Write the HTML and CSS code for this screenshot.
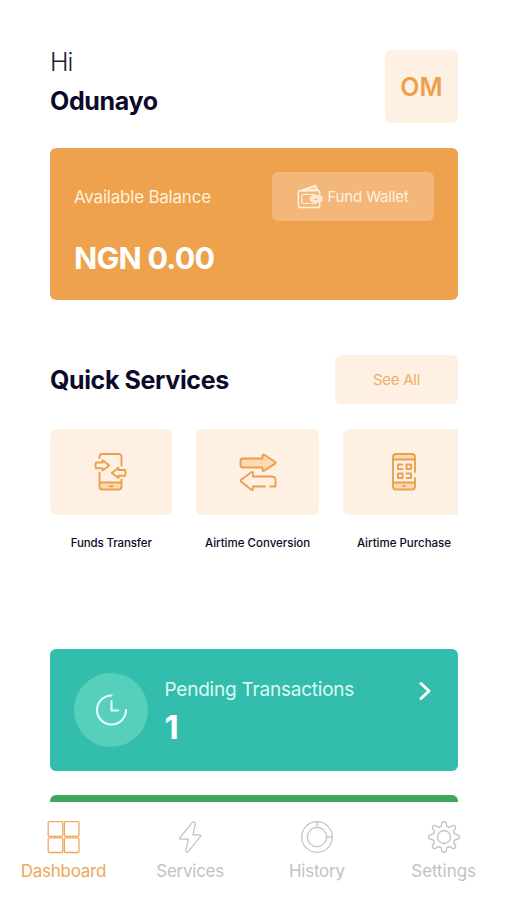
FILE: index.html
```html
<!DOCTYPE html>
<html lang="en">
<head>
<meta charset="utf-8">
<meta name="viewport" content="width=device-width, initial-scale=1">
<title>Dashboard</title>
<link rel="stylesheet" href="styles.css">
</head>
<body>
<div class="app">
  <main class="content">
    <header class="header">
      <div>
        <p class="greeting">Hi</p>
        <h1 class="name">Odunayo</h1>
      </div>
      <div class="avatar">OM</div>
    </header>

    <section class="balance">
      <div class="balance-row">
        <span class="balance-label">Available Balance</span>
        <button class="fund">
          <svg width="26" height="26" viewBox="0 0 26 26" fill="none" stroke="currentColor" stroke-width="1.5" stroke-linejoin="round" stroke-linecap="round">
            <path d="M4 6.800 18.500 1.500l2.200 4.600Z" fill="currentColor" fill-opacity=".45" />
            <path d="M22.700 10V8.300q0-1.500-1.500-1.500H3Q1.400 6.800 1.400 8.400v12.800q0 2.400 2.400 2.400h17.400q1.500 0 1.500-1.500V19" />
            <path d="M13 19.500H6q-1.200 0-1.200-1.200v-6.600q0-1.200 1.200-1.200h11.500q1.200 0 1.200 1M18.700 18.500v1h-4" stroke-width="1.200" />
            <path d="M16 11.800h7.200q1.800 0 1.800 1.800v2.600q0 1.800-1.800 1.800H16q-3-.5-3-3.100t3-3.100Z" fill="currentColor" fill-opacity=".8" stroke-width="1" />
            <path d="M17.500 15.500q1.500 1 3-.5" stroke="#f3b879" stroke-width="1" />
          </svg>
          <span>Fund Wallet</span>
        </button>
      </div>
      <strong class="amount">NGN 0.00</strong>
    </section>

    <section class="quick">
      <div class="quick-head">
        <h2 class="quick-title">Quick Services</h2>
        <button class="see-all">See All</button>
      </div>
      <div class="tiles">
        <div class="service">
          <div class="tile">
            <svg width="36" height="40" viewBox="0 0 36 40" fill="none" stroke="currentColor" stroke-width="1.900" stroke-linejoin="round" stroke-linecap="round">
              <path d="M7 31h22v3.500q0 3-3 3H10q-3 0-3-3Z" fill="#fbd9b5" stroke="none" />
              <path d="M6.500 6V5q0-3 3-3h16q3 0 3 3v8.500M6.500 20.500v14q0 3 3 3h16q3 0 3-3v-7M6.500 30.500h22M16.500 34.200h3" />
              <path d="M3 10.500h6.500V8.300l6.800 5.100-6.800 5.100v-2.200H3q-1.400-2.900 0-5.800ZM32 18h-6.500v-2.200l-6.800 5.100 6.800 5.100v-2.200H32q1.400-2.900 0-5.800Z" />
            </svg>
          </div>
          <span class="service-name narrow">Funds Transfer</span>
        </div>
        <div class="service">
          <div class="tile">
            <svg width="40" height="40" viewBox="0 0 40 40" fill="none" stroke="currentColor" stroke-width="1.900" stroke-linejoin="round" stroke-linecap="round">
              <path d="M4.500 6.500h20V3.800q0-2 1.700-1l10.800 7q1.300.900 0 1.800l-10.800 7q-1.700 1-1.700-1v-2.100h-20Q2.500 15.500 2.500 13V9q0-2.500 2-2.500Z" fill="#fbd9b5" />
              <path d="M27 34.500H15v2.300q0 2-1.700 1l-10-8q-1.300-1 0-2l10-7.600q1.700-1 1.700 1v3.300h19q3.500 0 3.500 3.500v6.500H32" />
            </svg>
          </div>
          <span class="service-name">Airtime Conversion</span>
        </div>
        <div class="service">
          <div class="tile">
            <svg width="26" height="40" viewBox="0 0 26 40" fill="none" stroke="currentColor" stroke-width="1.900" stroke-linejoin="round" stroke-linecap="round">
              <path d="M2 8V5q0-3 3-3h16q3 0 3 3v3ZM2 30.500h22v4q0 3-3 3H5q-3 0-3-3Z" fill="#fbd9b5" stroke="none" />
              <path d="M24 20V5q0-3-3-3H5Q2 2 2 5v29.500q0 3 3 3h16q3 0 3-3V26M2 7.500h22M2 30.500h22M12.300 34h1.400" />
              <path d="M11.500 12.500H7v4.500h4.500M15.500 12.500H20V17h-4.500ZM7 21.500h4.500V26H7ZM15.500 21.500H20V26h-4.500" />
            </svg>
          </div>
          <span class="service-name">Airtime Purchase</span>
        </div>
      </div>
    </section>

    <section class="pending">
      <div class="clock">
        <svg width="32" height="32" viewBox="0 0 32 32" fill="none" stroke="currentColor" stroke-width="2.100" stroke-linecap="round" stroke-linejoin="round">
          <path d="M16.500 1.500A14.500 14.500 0 1 0 31 16" />
          <path d="M16.500 7v9.500h6.500" />
        </svg>
      </div>
      <div class="pending-text">
        <span class="pending-label">Pending Transactions</span>
        <strong class="pending-count">1</strong>
      </div>
      <svg class="chevron" width="14" height="20" viewBox="0 0 14 20" fill="none" stroke="currentColor" stroke-width="3" stroke-linecap="round" stroke-linejoin="round">
        <path d="M3 2.500l8 7.500-8 7.500" />
      </svg>
    </section>

    <section class="completed"></section>
  </main>

  <nav class="nav">
    <a class="nav-item active">
      <svg width="34" height="34" viewBox="0 0 34 34" fill="none" stroke="currentColor" stroke-width="1.300">
        <rect x="2.200" y="1.700" width="14.600" height="14.600" rx="1.200" /><rect x="18.400" y="1.700" width="14.600" height="14.600" rx="1.200" />
        <rect x="2.200" y="17.900" width="14.600" height="14.600" rx="1.200" /><rect x="18.400" y="17.900" width="14.600" height="14.600" rx="1.200" />
      </svg>
      <span>Dashboard</span>
    </a>
    <a class="nav-item">
      <svg width="34" height="34" viewBox="0 0 34 34" fill="none" stroke="currentColor" stroke-width="1.200" stroke-linejoin="round">
        <path d="M19.200 2.600 7.100 17.500q-1 1.600.8 1.600h7.400l-2.500 11.200q-.2 1.800 1.200 1.800 1 0 1.700-1L27.500 16.300q.9-1.500-.8-1.500H20l2.300-11q.2-1.900-1.300-2-1-.1-1.800.8Z" />
      </svg>
      <span>Services</span>
    </a>
    <a class="nav-item">
      <svg width="34" height="34" viewBox="0 0 34 34" fill="none" stroke="currentColor" stroke-width="1.200">
        <circle cx="17" cy="17" r="15.300" /><circle cx="17" cy="17" r="9.700" />
        <path d="M16.400 1.700v5.600M18 1.700v5.600M26.700 16.400h5.600M26.700 17.800h5.600" stroke-width=".8" />
      </svg>
      <span>History</span>
    </a>
    <a class="nav-item settings">
      <svg width="34" height="34" viewBox="-17 -17 34 34" fill="none" stroke="currentColor" stroke-width="1.300" stroke-linecap="round">
        <defs><path id="tooth" d="M-4.300-10.400C-3-9.900-2.700-11-2.500-12.500-2.200-14.700-1.700-15.500 0-15.500S2.200-14.700 2.500-12.500C2.700-11 3-9.900 4.300-10.400" /></defs>
        <use href="#tooth" /><use href="#tooth" transform="rotate(45)" /><use href="#tooth" transform="rotate(90)" /><use href="#tooth" transform="rotate(135)" />
        <use href="#tooth" transform="rotate(180)" /><use href="#tooth" transform="rotate(225)" /><use href="#tooth" transform="rotate(270)" /><use href="#tooth" transform="rotate(315)" />
        <circle r="6.500" />
      </svg>
      <span>Settings</span>
    </a>
  </nav>
</div>
</body>
</html>
```

FILE: styles.css
```css
* { box-sizing: border-box; margin: 0; padding: 0; }
body { background: #fff; color: #0c0a2a; font-family: Inter, "Liberation Sans", sans-serif; }
button { border: 0; font: inherit; }
svg { display: block; flex: none; }
.app { display: flex; flex-direction: column; height: 900px; overflow: hidden; }
.content { height: 802px; padding: 50px 49px 0 50px; overflow: hidden; }

.header { display: flex; justify-content: space-between; height: 74px; }
.greeting { font-size: 25px; font-weight: 300; line-height: 24px; letter-spacing: -.9px; color: #1f1d38; }
.name { margin-top: 12px; font-size: 25px; font-weight: 700; line-height: 30px; letter-spacing: -.35px; }
.avatar { width: 73px; height: 73px; border-radius: 6px; background: #fef1e4; color: #eba04d; display: flex; align-items: center; justify-content: center; font-size: 25px; font-weight: 600; }

.balance { margin-top: 24px; height: 152px; padding: 24px; border-radius: 6px; background: #eea24e; color: #fff; }
.balance-row { display: flex; align-items: center; justify-content: space-between; }
.balance-label { font-size: 17px; letter-spacing: -.22px; color: #fff1df; }
.fund { display: flex; align-items: center; justify-content: center; gap: 4px; width: 162px; height: 49px; border-radius: 6px; background: #f3b879; color: #fff1e0; font-size: 15px; letter-spacing: -.15px; }
.amount { display: block; margin-top: 19px; font-size: 30.500px; font-weight: 700; line-height: 36px; letter-spacing: -.8px; }

.quick { margin-top: 55px; height: 293.500px; }
.quick-head { display: flex; align-items: center; justify-content: space-between; height: 49px; }
.quick-title { font-size: 25px; font-weight: 700; letter-spacing: -.38px; }
.see-all { width: 123px; height: 49px; border-radius: 6px; background: #fef1e4; color: #f0ae68; font-size: 15px; letter-spacing: -.25px; }
.tiles { display: flex; gap: 24px; margin-top: 25px; overflow: hidden; }
.service { flex: none; width: 122.400px; text-align: center; }
.tile { display: flex; align-items: center; justify-content: center; height: 85.500px; border-radius: 6px; background: #fef1e4; color: #eba04d; }
.service-name { display: block; margin-top: 18.500px; font-size: 11.500px; font-weight: 500; line-height: 20px; white-space: nowrap; }
.narrow { letter-spacing: -.12px; }

.pending { display: flex; height: 122px; padding: 24px; border-radius: 6px; background: #33bdad; color: #fff; }
.clock { display: flex; align-items: center; justify-content: center; width: 74px; height: 74px; border-radius: 50%; background: #56d0bb; color: #e6fff9; }
.pending-text { display: flex; flex-direction: column; margin-left: 16.500px; }
.pending-label { margin-top: 5.500px; font-size: 19px; line-height: 24px; letter-spacing: -.22px; color: #dcfaf3; white-space: nowrap; }
.pending-count { margin-top: 6px; font-size: 33px; font-weight: 700; line-height: 38px; }
.chevron { margin: 8px 2px 0 auto; }
.completed { margin-top: 24.500px; height: 122px; border-radius: 6px; background: #3fa75c; }

.nav { display: grid; grid-template-columns: repeat(4, 1fr); height: 98px; padding-top: 18px; }
.nav-item { display: flex; flex-direction: column; align-items: center; gap: 5px; color: #c2c2c2; font-size: 17px; line-height: 24px; letter-spacing: -.25px; }
.nav-item.active { color: #eda85c; }
.nav-item.settings { letter-spacing: -.05px; }
```
